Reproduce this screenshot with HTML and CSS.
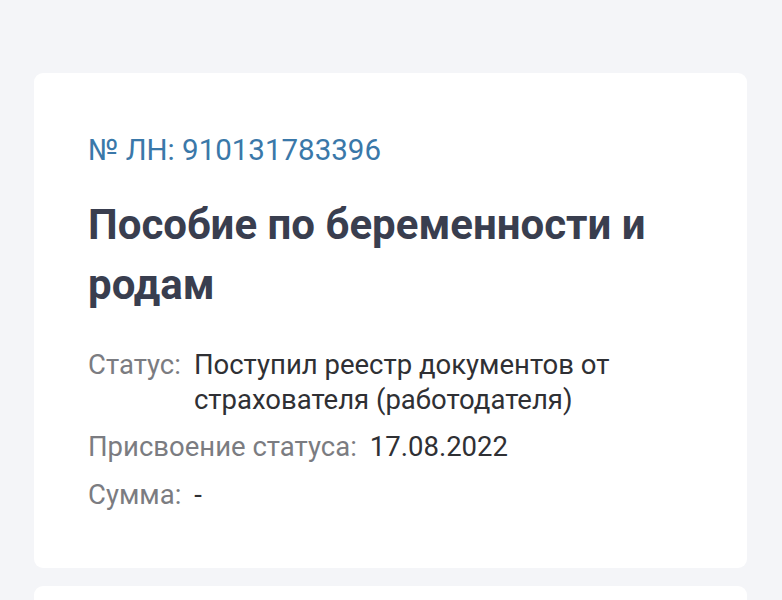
FILE: index.html
```html
<!DOCTYPE html>
<html lang="ru">
<head>
<meta charset="utf-8">
<link rel="stylesheet" href="styles.css">
</head>
<body>
<div class="page">
  <div class="card">
    <div class="number">№ ЛН: 910131783396</div>
    <h1 class="title">Пособие по беременности и родам</h1>
    <div class="rows">
      <div class="row"><span class="label">Статус:</span><span class="value">Поступил реестр документов от страхователя (работодателя)</span></div>
      <div class="row row-gap2"><span class="label">Присвоение статуса:</span><span class="value">17.08.2022</span></div>
      <div class="row row-gap3"><span class="label">Сумма:</span><span class="value">-</span></div>
    </div>
  </div>
  <div class="card card-next"></div>
</div>
</body>
</html>
```
FILE: styles.css
```css
html, body {
  margin: 0;
  padding: 0;
  background: #f4f5f8;
  font-family: Roboto, "Noto Sans", sans-serif;
}
.page {
  padding: 73px 35px 0 34px;
  display: flex;
  flex-direction: column;
  gap: 18px;
}
.card {
  background: #ffffff;
  border-radius: 9px;
  padding: 60px 54px 56px 54px;
}
.card-next {
  height: 15px;
  padding: 0;
  border-radius: 9px 9px 0 0;
}
.number {
  color: #3a78a9;
  font-size: 29.5px;
  line-height: 34px;
}
.title {
  margin: 28px 0 0 0;
  color: #393e4f;
  font-size: 42px;
  font-weight: 700;
  line-height: 60px;
}
.rows {
  margin-top: 32px;
  display: flex;
  flex-direction: column;
}
.row {
  display: flex;
  gap: 13px;
  font-size: 27.5px;
  line-height: 35px;
}
.row-gap2 {
  margin-top: 12px;
}
.row-gap3 {
  margin-top: 13px;
}
.label {
  color: #7b7c81;
  flex: none;
}
.value {
  color: #2f3034;
}
```
